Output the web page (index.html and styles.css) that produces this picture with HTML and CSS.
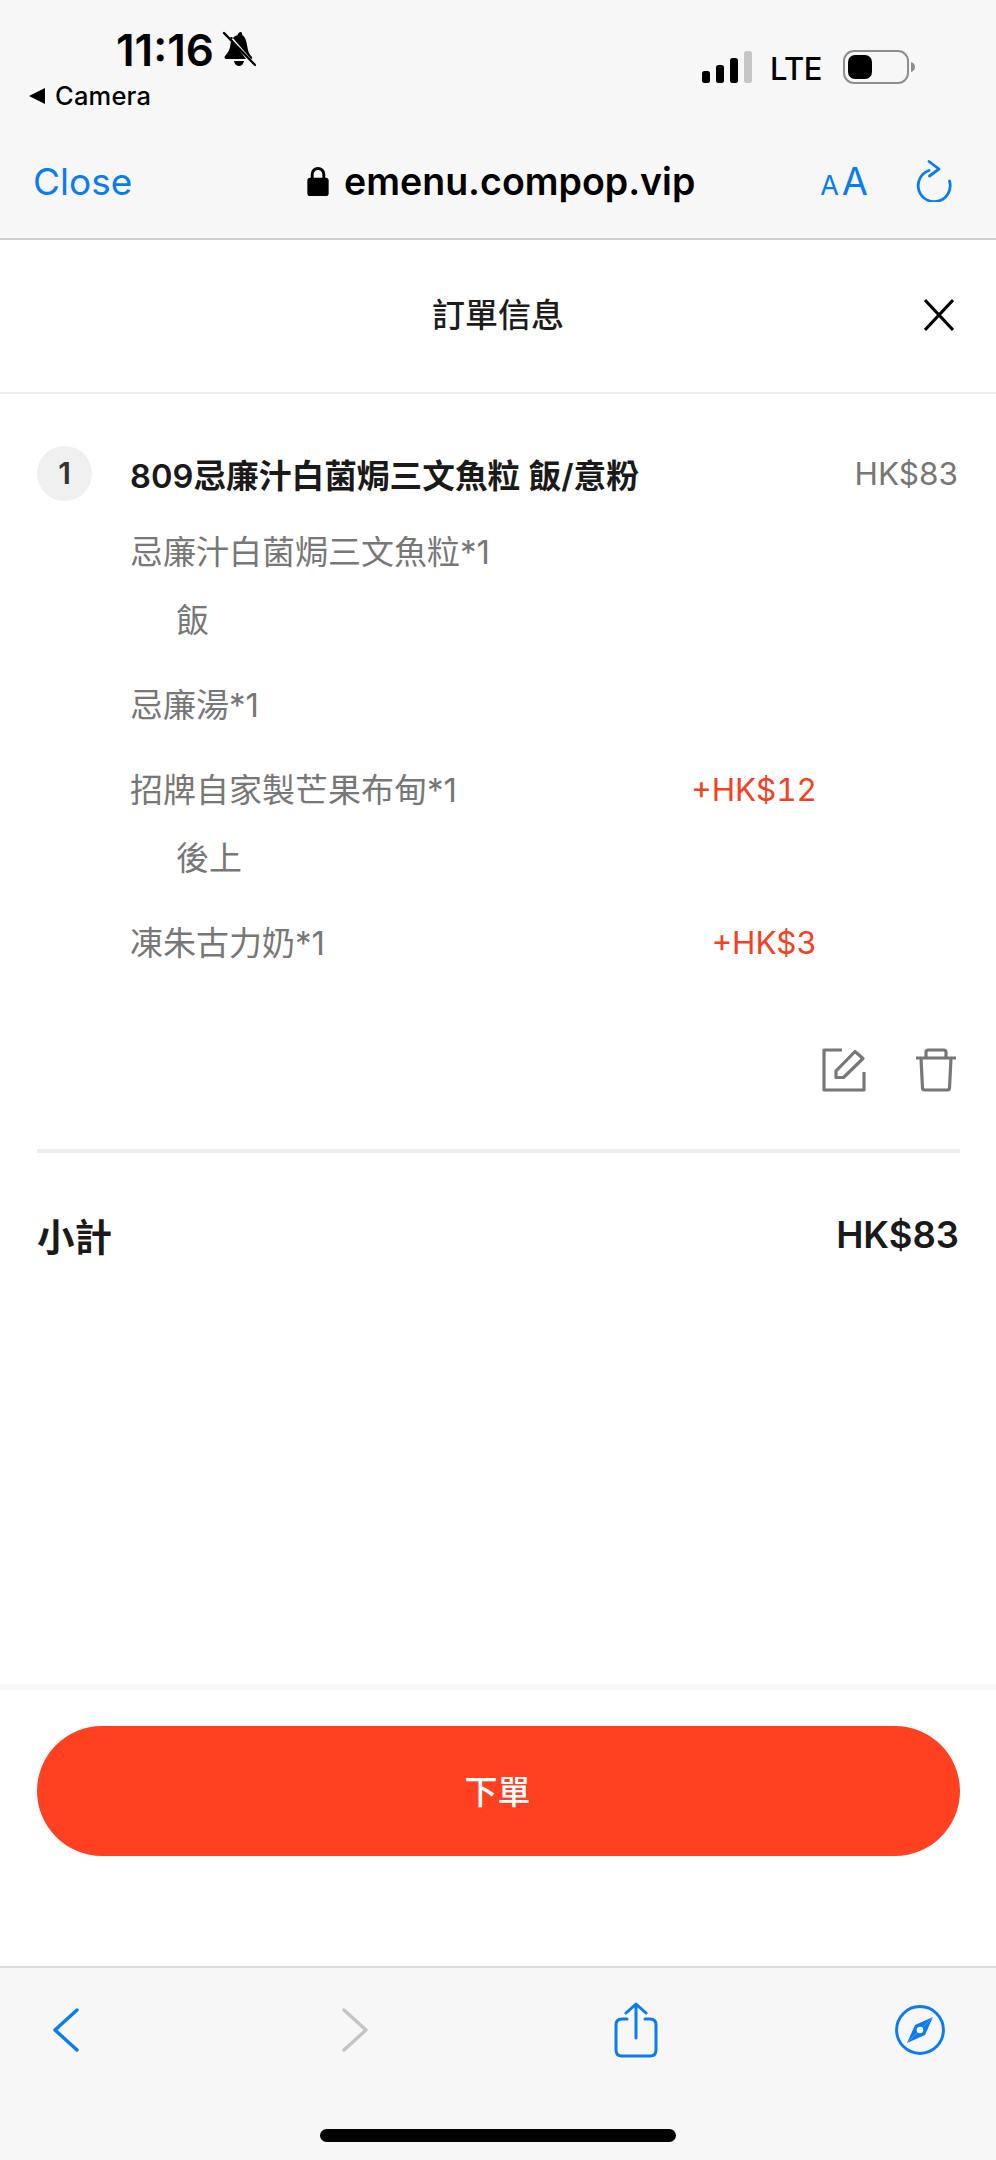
FILE: index.html
```html
<!DOCTYPE html>
<html lang="zh-Hant">
<head>
<meta charset="utf-8">
<title>訂單信息</title>
<link rel="stylesheet" href="styles.css">
</head>
<body>
<div class="screen">
  <header class="chrome">
    <div class="status">
      <div class="status-left">
        <div class="time-row">
          <span class="time">11:16</span>
          <svg class="bell" viewBox="0 0 34 36" width="34" height="36"><path fill="#000" d="M19 1c-2 0-3 1.500-3.500 3C11 5.500 9 9 8.500 13c-.4 5-2 8-5.500 12-1 1.500-.5 3 1.500 3h19.500L8 6l2 0 19 22c1 0 1.500-1 1-2-3-3-4-6-5-12-.7-5-2.500-9-4.500-9.500C20 3 20 1 19 1z"/><path fill="#000" d="M12 30h10c-.5 3-2.500 5-5 5s-4.500-2-5-5z"/><path stroke="#000" stroke-width="2.400" stroke-linecap="round" d="M2 2l31 32"/></svg>
        </div>
        <div class="back-app">
          <svg class="back-tri" viewBox="0 0 16 16" width="16" height="16"><path fill="#000" d="M0 8L16 0v16z"/></svg>
          <span>Camera</span>
        </div>
      </div>
      <div class="status-right">
        <svg class="signal" viewBox="0 0 52 32" width="52" height="32"><rect x="0" y="20" width="8" height="12" rx="2.500" fill="#000"/><rect x="14" y="14" width="8" height="18" rx="2.500" fill="#000"/><rect x="28" y="7" width="8" height="25" rx="2.500" fill="#000"/><rect x="42" y="0" width="8" height="32" rx="2.500" fill="#c6c6c6"/></svg>
        <span class="lte">LTE</span>
        <svg class="battery" viewBox="0 0 72 34" width="72" height="34"><rect x="1" y="1" width="64" height="32" rx="10" fill="none" stroke="#8e8e8e" stroke-width="2"/><rect x="5" y="5" width="24" height="24" rx="7" fill="#000"/><path fill="#8e8e8e" d="M68 12c2.500.5 4 2.500 4 5s-1.500 4.500-4 5z"/></svg>
      </div>
    </div>
    <div class="urlbar">
      <span class="close-link">Close</span>
      <div class="url">
        <svg class="lock" viewBox="0 0 22 32" width="22" height="31"><path fill="none" stroke="#000" stroke-width="3" d="M5 14V8.500a6 6 0 0 1 12 0V14"/><rect x="0" y="12" width="22" height="19" rx="3" fill="#000"/></svg>
        <span>emenu.compop.vip</span>
      </div>
      <div class="url-actions">
        <span class="aa"><span class="aa-s">A</span><span class="aa-l">A</span></span>
        <svg class="reload" viewBox="0 0 36 42" width="36" height="42" fill="none" stroke="#0a7cf0" stroke-width="2.800" stroke-linecap="round" stroke-linejoin="round"><path d="M13 10.500A16 16 0 1 0 33.500 21"/><path d="M13 1.500l10 7.500-9.500 7"/></svg>
      </div>
    </div>
  </header>

  <main class="sheet">
    <div class="sheet-head">
      <h1 class="sheet-title">訂單信息</h1>
      <svg class="sheet-close" viewBox="0 0 30 32" width="30" height="32" fill="none" stroke="#000" stroke-width="3"><path d="M1 1l28 30M29 1L1 31"/></svg>
    </div>

    <section class="order">
      <div class="item-head">
        <span class="badge">1</span>
        <span class="item-name">809忌廉汁白菌焗三文魚粒 飯/意粉</span>
        <span class="item-price">HK$83</span>
      </div>
      <ul class="options">
        <li class="option"><div class="opt-row"><span>忌廉汁白菌焗三文魚粒*1</span></div><div class="opt-sub">飯</div></li>
        <li class="option"><div class="opt-row"><span>忌廉湯*1</span></div></li>
        <li class="option"><div class="opt-row"><span>招牌自家製芒果布甸*1</span><span class="opt-add">+HK$12</span></div><div class="opt-sub">後上</div></li>
        <li class="option"><div class="opt-row"><span>凍朱古力奶*1</span><span class="opt-add">+HK$3</span></div></li>
      </ul>
      <div class="item-actions">
        <svg class="act-edit" viewBox="0 0 44 44" width="44" height="44" fill="none" stroke="#777" stroke-width="3.200" stroke-linejoin="round"><path d="M20 2H2v40h40V24"/><path d="M14 29.500v-6.500L33 3.500l8 7-19.500 19z"/></svg>
        <svg class="act-trash" viewBox="0 0 40 44" width="40" height="44" fill="none" stroke="#777" stroke-width="3.200" stroke-linejoin="round"><path d="M0 10h40"/><path d="M10 9V4q0-2 2-2h16q2 0 2 2v5"/><path d="M5 10l1.500 30q0 2 2.500 2h22q2.500 0 2.500-2L35 10"/></svg>
      </div>
      <div class="subtotal">
        <span>小計</span>
        <span class="subtotal-val">HK$83</span>
      </div>
    </section>

    <div class="submit-bar">
      <button class="submit" type="button">下單</button>
    </div>
  </main>

  <footer class="toolbar">
    <div class="tools">
      <svg class="tool-back" viewBox="0 0 28 44" width="28" height="44" fill="none" stroke="#0a7cf0" stroke-width="3.400" stroke-linecap="round" stroke-linejoin="round"><path d="M25 2L3 22l22 20"/></svg>
      <svg class="tool-fwd" viewBox="0 0 28 44" width="28" height="44" fill="none" stroke="#c4c4c4" stroke-width="3.400" stroke-linecap="round" stroke-linejoin="round"><path d="M3 2l22 20L3 42"/></svg>
      <svg class="tool-share" viewBox="0 0 44 56" width="44" height="56" fill="none" stroke="#0a7cf0" stroke-width="3" stroke-linecap="round" stroke-linejoin="round"><path d="M13 17H8q-6 0-6 6v25q0 6 6 6h28q6 0 6-6V23q0-6-6-6h-5"/><path d="M22 36V2M12 11l10-9 10 9"/></svg>
      <svg class="tool-compass" viewBox="0 0 50 50" width="50" height="50"><circle cx="25" cy="25" r="23.400" fill="none" stroke="#0a7cf0" stroke-width="3"/><path fill="#0a7cf0" d="M38 12L12 38l8-18z"/><path fill="#0a7cf0" d="M38 12L12 38l18-8z"/><circle cx="25" cy="25" r="3.300" fill="#f7f7f7"/></svg>
    </div>
    <div class="home-bar"></div>
  </footer>
</div>
</body>
</html>
```

FILE: styles.css
```css
* { box-sizing: border-box; }
html, body { margin: 0; padding: 0; background: #fff; }
body { font-family: Inter, "Noto Sans CJK TC", "Noto Sans", sans-serif; }
.screen { width: 996px; height: 2160px; display: flex; flex-direction: column; overflow: hidden; }

.chrome { height: 240px; background: #f7f7f7; border-bottom: 2px solid #cfcfcf; flex: none; }
.status { height: 135px; display: flex; justify-content: space-between; padding: 30px 0 0 29px; }
.time-row { display: flex; align-items: center; gap: 8px; margin-left: 87px; height: 40px; }
.time { font-size: 44px; font-weight: 600; line-height: 40px; color: #000; }
.bell { margin-top: -2px; }
.back-app { display: flex; align-items: center; gap: 10px; margin-top: 11px; font-size: 25.500px; font-weight: 500; color: #000; line-height: 30px; letter-spacing: .2px; }
.status-right { display: flex; align-items: center; height: 34px; margin-top: 20px; padding-right: 81px; }
.signal { margin-right: 16px; }
.lte { font-size: 31px; font-weight: 500; letter-spacing: -.5px; margin-right: 21px; margin-top: 2px; color: #000; }
.urlbar { display: flex; align-items: center; height: 92px; padding: 0 44px 0 33px; justify-content: space-between; }
.close-link { font-size: 37px; color: #0a7cf0; }
.url { display: flex; align-items: center; gap: 15px; font-size: 37.500px; font-weight: 600; color: #000; margin-left: 50px; }
.url-actions { display: flex; align-items: center; gap: 48px; }
.aa { color: #0a7cf0; display: flex; align-items: baseline; gap: 3px; }
.aa-s { font-size: 27px; }
.aa-l { font-size: 38px; }
.sheet { flex: 1; display: flex; flex-direction: column; background: #fff; min-height: 0; border-bottom: 2px solid #dcdcdc; }
.sheet-head { height: 154px; display: flex; align-items: center; justify-content: center; position: relative; border-bottom: 2px solid #eeeeee; flex: none; padding-bottom: 6px; }
.sheet-title { margin: 0; font-size: 33px; font-weight: 500; color: #1c1c1c; }
.sheet-close { position: absolute; right: 42px; top: 59px; }

.order { flex: 1; padding: 51px 36px 0 37px; min-height: 0; }
.item-head { display: flex; align-items: center; height: 56px; }
.badge { width: 55px; height: 55px; border-radius: 50%; background: #f0f0f0; color: #333; font-size: 30px; font-weight: 600; display: flex; align-items: center; justify-content: center; flex: none; }
.item-name { margin-left: 38px; font-size: 32.700px; font-weight: 600; color: #1a1a1a; flex: 1; }
.item-price { font-size: 31.500px; color: #777; margin-right: 2px; }
.options { list-style: none; margin: 28px 0 0 93px; padding: 0; color: #777; font-size: 33px; }
.option { margin-bottom: 39px; }
.opt-row { display: flex; justify-content: space-between; width: 687px; height: 46px; line-height: 46px; }
.opt-sub { margin: 22px 0 0 46px; height: 46px; line-height: 46px; }
.opt-add { color: #f4411f; font-size: 31.500px; font-variant-numeric: tabular-nums; }
.item-actions { display: flex; justify-content: flex-end; gap: 50px; padding-right: 4px; margin-top: 82px; }
.subtotal { display: flex; justify-content: space-between; align-items: center; border-top: 4px solid #eeeeee; margin-top: 57px; height: 167px; font-size: 37.500px; font-weight: 600; color: #1a1a1a; padding-right: 1px; }
.subtotal-val { font-size: 36.500px; }
.submit-bar { flex: none; height: 282px; border-top: 6px solid #f8f8f8; padding: 36px 36px 0 37px; }
.submit { display: block; width: 100%; height: 130px; border: 0; border-radius: 65px; background: #ff4122; color: #fff; font: 500 33px Inter, "Noto Sans CJK TC", sans-serif; padding: 0 2px 3px 0; }

.toolbar { height: 192px; flex: none; background: #f7f7f7; }
.tools { display: flex; align-items: center; height: 123px; padding-left: 52px; }
.tool-fwd { margin-left: 261px; }
.tool-share { margin-left: 245px; }
.tool-compass { margin-left: 237px; }
.home-bar { width: 356px; height: 13px; border-radius: 7px; background: #000; margin: 38px auto 0; }
```
